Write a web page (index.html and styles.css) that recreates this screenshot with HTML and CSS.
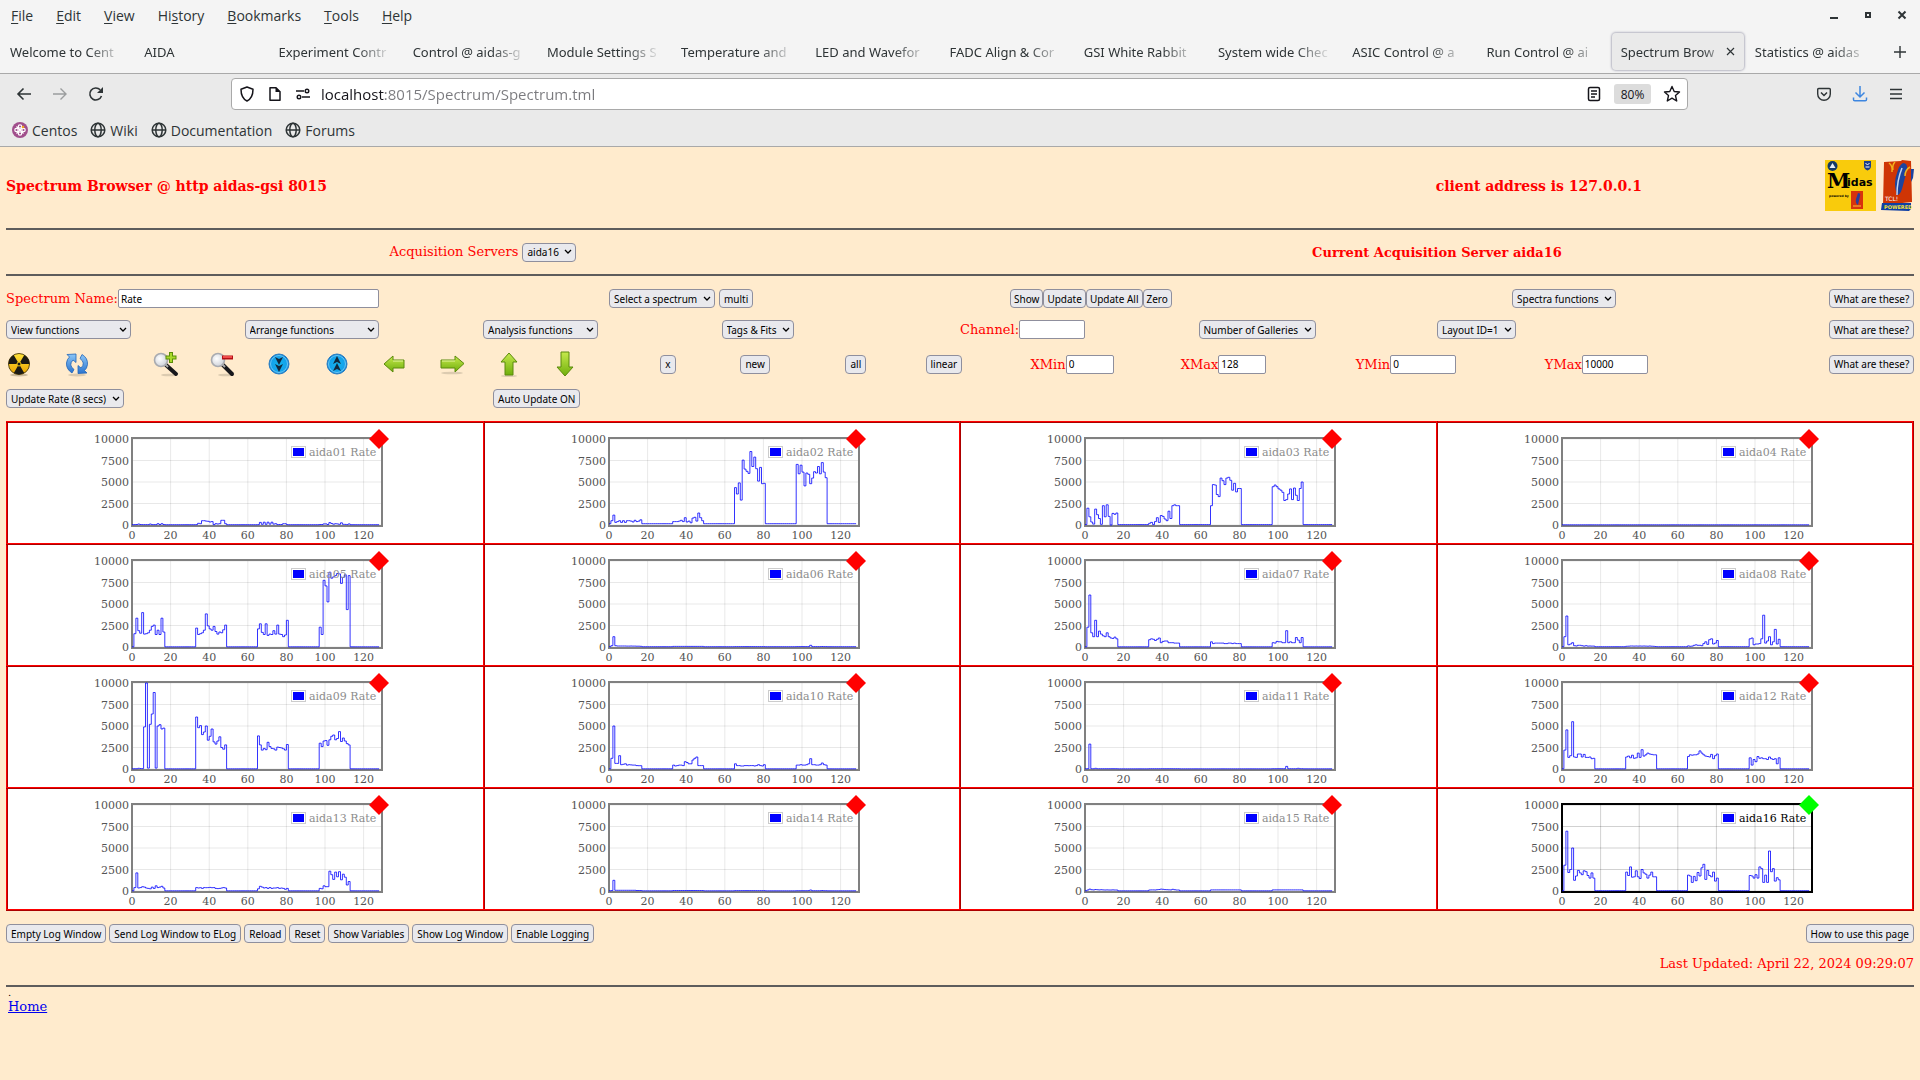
FILE: index.html
```html
<!DOCTYPE html>
<html lang="en">
<head>
    <meta charset="UTF-8">
    <meta name="viewport" content="width=device-width, initial-scale=1.0">
    <title>Spectrum Browser @ aidas-gsi</title>
    <link rel="stylesheet" href="styles.css">
</head>
<body>
    <!-- shared gradients for the toolbar icons -->
    <svg class="defs" width="0" height="0" aria-hidden="true">
        <defs>
            <linearGradient id="green" x1="0" y1="0" x2="0" y2="1">
                <stop offset="0" stop-color="#c6e94c"/>
                <stop offset="1" stop-color="#6fae0c"/>
            </linearGradient>
            <linearGradient id="blue" x1="0" y1="0" x2="0" y2="1">
                <stop offset="0" stop-color="#8cc6f7"/>
                <stop offset="1" stop-color="#2a74cf"/>
            </linearGradient>
            <radialGradient id="disc" cx=".5" cy=".5" r=".5">
                <stop offset="0" stop-color="#12b4ee"/>
                <stop offset=".8" stop-color="#14a0ea"/>
                <stop offset="1" stop-color="#0b6fc0"/>
            </radialGradient>
            <linearGradient id="amber" x1="0" y1="0" x2="0" y2="1">
                <stop offset="0" stop-color="#ffe23a"/>
                <stop offset="1" stop-color="#eba400"/>
            </linearGradient>
            <radialGradient id="lens" cx=".4" cy=".4" r=".6">
                <stop offset="0" stop-color="#ffffff"/>
                <stop offset="1" stop-color="#cfd3da"/>
            </radialGradient>
        </defs>
    </svg>

    <header class="browser">
        <div class="menubar">
            <nav class="menus">
                <a href="#"><u>F</u>ile</a>
                <a href="#"><u>E</u>dit</a>
                <a href="#"><u>V</u>iew</a>
                <a href="#">Hi<u>s</u>tory</a>
                <a href="#"><u>B</u>ookmarks</a>
                <a href="#"><u>T</u>ools</a>
                <a href="#"><u>H</u>elp</a>
            </nav>
            <div class="window-buttons">
                <button type="button" aria-label="Minimize"><svg width="10" height="10" viewBox="0 0 10 10"><path d="M1 8h8" stroke="#2e3436" stroke-width="2"/></svg></button>
                <button type="button" aria-label="Maximize"><svg width="10" height="10" viewBox="0 0 10 10"><rect x="3" y="3" width="4" height="4" fill="none" stroke="#2e3436" stroke-width="2"/></svg></button>
                <button type="button" aria-label="Close"><svg width="10" height="10" viewBox="0 0 10 10"><path d="M1.500 1.500l7 7m0-7l-7 7" stroke="#2e3436" stroke-width="2"/></svg></button>
            </div>
        </div>

        <div class="tabbar">
            <a class="tab" href="#"><span>Welcome to Cent</span></a>
            <a class="tab" href="#"><span>AIDA</span></a>
            <a class="tab" href="#"><span>Experiment Contr</span></a>
            <a class="tab" href="#"><span>Control @ aidas-g</span></a>
            <a class="tab" href="#"><span>Module Settings S</span></a>
            <a class="tab" href="#"><span>Temperature and</span></a>
            <a class="tab" href="#"><span>LED and Wavefor</span></a>
            <a class="tab" href="#"><span>FADC Align &amp; Cor</span></a>
            <a class="tab" href="#"><span>GSI White Rabbit</span></a>
            <a class="tab" href="#"><span>System wide Chec</span></a>
            <a class="tab" href="#"><span>ASIC Control @ a</span></a>
            <a class="tab" href="#"><span>Run Control @ ai</span></a>
            <a class="tab active" href="#"><span>Spectrum Brow</span><svg width="9" height="9" viewBox="0 0 9 9"><path d="M1 1l7 7m0-7l-7 7" stroke="#2e3436" stroke-width="1.200"/></svg></a>
            <a class="tab" href="#"><span>Statistics @ aidas</span></a>
            <button class="new-tab" type="button" aria-label="New tab"><svg width="12" height="12" viewBox="0 0 12 12"><path d="M6 0v12M0 6h12" stroke="#2e3436" stroke-width="1.400"/></svg></button>
        </div>

        <div class="toolbar">
            <div class="nav-buttons">
                <button type="button" aria-label="Back"><svg width="16" height="16" viewBox="0 0 16 16"><path d="M15 8H2m5.500-5.500L2 8l5.500 5.500" fill="none" stroke="#2e3436" stroke-width="1.600"/></svg></button>
                <button type="button" aria-label="Forward" disabled><svg width="16" height="16" viewBox="0 0 16 16"><path d="M1 8h13M8.500 2.500L14 8l-5.500 5.500" fill="none" stroke="#9b9d9e" stroke-width="1.400"/></svg></button>
                <button type="button" aria-label="Reload page"><svg width="16" height="16" viewBox="0 0 16 16"><path d="M13.500 10a6 6 0 1 1-1.300-6.200" fill="none" stroke="#2e3436" stroke-width="1.600"/><path d="M15 1v6H9z" fill="#2e3436"/></svg></button>
            </div>
            <div class="urlbar">
                <svg width="16" height="16" viewBox="0 0 16 16"><path d="M8 1l6 2.200C14 9 12 13 8 15 4 13 2 9 2 3.200z" fill="none" stroke="#15141a" stroke-width="1.500" stroke-linejoin="round"/></svg>
                <svg width="16" height="16" viewBox="0 0 16 16"><path d="M3 1.700h6l4 4v8.600H3z" fill="none" stroke="#15141a" stroke-width="1.500" stroke-linejoin="round"/><path d="M8.500 1l5 5h-5z" fill="#15141a"/></svg>
                <svg width="16" height="16" viewBox="0 0 16 16"><g fill="none" stroke="#15141a" stroke-width="1.400"><path d="M1 5h8M7 11h8"/><circle cx="12" cy="5" r="1.800"/><circle cx="4" cy="11" r="1.800"/></g></svg>
                <input class="url" type="text" aria-label="Address" value="localhost:8015/Spectrum/Spectrum.tml">
                <svg width="16" height="16" viewBox="0 0 16 16"><rect x="2.500" y="1.500" width="11" height="13" rx="1.500" fill="none" stroke="#15141a" stroke-width="1.500"/><path d="M5 5h6M5 8h6M5 11h4" stroke="#15141a" stroke-width="1.300"/></svg>
                <button class="zoom-level" type="button">80%</button>
                <svg width="18" height="18" viewBox="0 0 18 18"><path d="M9 1.500l2.200 5 5.300.500-4 3.600 1.200 5.400L9 13.200 4.300 16l1.200-5.400-4-3.600 5.300-.500z" fill="none" stroke="#15141a" stroke-width="1.400" stroke-linejoin="round"/></svg>
            </div>
            <div class="end-buttons">
                <button type="button" aria-label="Save to Pocket"><svg width="16" height="16" viewBox="0 0 16 16"><path d="M1.700 3.500q0-1 1-1h10.600q1 0 1 1V8a6.300 6.300 0 0 1-12.600 0z" fill="none" stroke="#2e3436" stroke-width="1.400"/><path d="M5 6.500l3 3 3-3" fill="none" stroke="#2e3436" stroke-width="1.500"/></svg></button>
                <button type="button" aria-label="Downloads"><svg width="16" height="16" viewBox="0 0 16 16"><path d="M8 0v11M3.500 6.500L8 11l4.500-4.500M1.500 11.500v2q0 1.300 1.300 1.300h10.400q1.300 0 1.300-1.300v-2" fill="none" stroke="#3d86e0" stroke-width="1.500"/></svg></button>
                <button type="button" aria-label="Open menu"><svg width="16" height="16" viewBox="0 0 16 16"><path d="M2 3.500h12M2 8h12M2 12.500h12" stroke="#2e3436" stroke-width="1.400"/></svg></button>
            </div>
        </div>

        <nav class="bookmarks">
            <a href="#"><svg width="16" height="16" viewBox="0 0 16 16"><circle cx="8" cy="8" r="8" fill="#a14f8c"/><g fill="none" stroke="#fff" stroke-width="1.200"><circle cx="8" cy="4.500" r="1.700"/><circle cx="8" cy="11.500" r="1.700"/><circle cx="4.500" cy="8" r="1.700"/><circle cx="11.500" cy="8" r="1.700"/><path d="M4.500 4.500l7 7m0-7l-7 7"/></g><circle cx="11" cy="5" r="1.300" fill="#efa724"/></svg>Centos</a>
            <a href="#"><svg width="16" height="16" viewBox="0 0 16 16"><g fill="none" stroke="#2e3436" stroke-width="1.500"><circle cx="8" cy="8" r="6.800"/><ellipse cx="8" cy="8" rx="3.200" ry="6.800"/><path d="M1.500 8h13"/></g></svg>Wiki</a>
            <a href="#"><svg width="16" height="16" viewBox="0 0 16 16"><g fill="none" stroke="#2e3436" stroke-width="1.500"><circle cx="8" cy="8" r="6.800"/><ellipse cx="8" cy="8" rx="3.200" ry="6.800"/><path d="M1.500 8h13"/></g></svg>Documentation</a>
            <a href="#"><svg width="16" height="16" viewBox="0 0 16 16"><g fill="none" stroke="#2e3436" stroke-width="1.500"><circle cx="8" cy="8" r="6.800"/><ellipse cx="8" cy="8" rx="3.200" ry="6.800"/><path d="M1.500 8h13"/></g></svg>Forums</a>
        </nav>
    </header>

    <main class="page">
        <div class="title-row">
            <h3>Spectrum Browser @ http aidas-gsi 8015</h3>
            <h3 class="client">client address is 127.0.0.1</h3>
            <div class="logos">
                <svg width="51" height="51" viewBox="0 0 51 51">
                    <rect width="51" height="51" fill="#f9cb0c"/>
                    <circle cx="7.500" cy="6" r="5" fill="#123a66"/>
                    <path d="M4.500 8l3-5 3 5z" fill="#e6eef5"/>
                    <path d="M39 1h7v5q0 3-3.500 4.500Q39 9 39 6z" fill="#1b3f8b"/>
                    <path d="M40.500 3l2 2 2-2m-4 4h4" fill="none" stroke="#fff"/>
                    <text class="midas-m" x="2" y="28">M</text>
                    <text class="midas" x="22" y="26">idas</text>
                    <text class="powered" x="4" y="37">powered by</text>
                    <rect x="26" y="31" width="12" height="18" fill="#d8330c"/>
                    <path d="M33 33q3 0 2 3l-2 9q-3-2-2-6z" fill="#2a3d9b"/>
                    <path d="M28 46h8" stroke="#f7c53a"/>
                </svg>
                <svg width="33" height="51" viewBox="0 0 33 51">
                    <path d="M3 2l17-1 1-1 9 1 1 41-29 3z" fill="#cf3505"/>
                    <path d="M1 43l29 0v6l-2 2-28-1z" fill="#0f3fa5"/>
                    <path d="M22 3q5 0 4 7l-5 19q-2 6-5 6-4-12 0-22 2-8 6-10z" fill="#1c449f"/>
                    <path d="M21 8q-5 12-5 27" fill="none" stroke="#c5d4ee" stroke-width="1.500"/>
                    <path d="M8 3q4 3 3 9M14 2q-3 3-2 8M29 7q-5 3-5 9" fill="none" stroke="#f3b21c" stroke-width="1.500"/>
                    <path d="M30 9l3 0-1 9-2 4z" fill="#1c449f"/>
                    <text class="tcl" x="4" y="41">TCL!</text>
                    <text class="tcl-powered" x="3" y="49">POWERED</text>
                </svg>
            </div>
        </div>
        <hr>
        <div class="server-row">
            <div><label for="server">Acquisition Servers</label> <select id="server"><option>aida16</option></select></div>
            <strong>Current Acquisition Server aida16</strong>
        </div>
        <hr>

        <form class="controls">
            <div class="row row-name">
                <div><label for="name">Spectrum Name:</label><input class="name" type="text" id="name" value="Rate"></div>
                <div class="pair">
                    <select aria-label="Select a spectrum"><option>Select a spectrum</option></select>
                    <button type="button">multi</button>
                </div>
                <div class="tight"><button type="button">Show</button><button type="button">Update</button><button type="button">Update All</button><button type="button">Zero</button></div>
                <div><select aria-label="Spectra functions"><option>Spectra functions</option></select></div>
                <button type="button">What are these?</button>
            </div>

            <div class="row row-functions">
                <div><select class="wide" aria-label="View functions"><option>View functions</option></select></div>
                <div><select class="wider" aria-label="Arrange functions"><option>Arrange functions</option></select></div>
                <div><select class="mid" aria-label="Analysis functions"><option>Analysis functions</option></select></div>
                <div><select aria-label="Tags and fits"><option>Tags &amp; Fits</option></select></div>
                <div><label for="channel">Channel:</label><input class="range" type="text" id="channel"></div>
                <div><select aria-label="Number of galleries"><option>Number of Galleries</option></select></div>
                <div><select aria-label="Layout"><option>Layout ID=1</option></select></div>
                <button type="button">What are these?</button>
            </div>

            <div class="row row-view">
                <button class="icon" type="button" aria-label="Clear"><svg width="26" height="26" viewBox="0 0 26 26"><ellipse cx="13" cy="24" rx="9" ry="1.500" fill="#cbb99b"/><circle cx="13" cy="13" r="10.500" fill="url(#amber)" stroke="#5c4a10"/><path d="M13 13H2.500a10.500 10.500 0 0 1 5.200-9.100zM13 13h10.500a10.500 10.500 0 0 0-5.200-9.100zM13 13l-5.200 9.100a10.500 10.500 0 0 0 10.400 0z" fill="#1b1a14"/><circle cx="13" cy="13" r="2" fill="#1b1a14" stroke="#f5c814"/></svg></button>
                <button class="icon" type="button" aria-label="Refresh"><svg width="26" height="26" viewBox="0 0 26 26"><ellipse cx="13" cy="24" rx="9" ry="1.500" fill="#dccbb0"/><g fill="url(#blue)" stroke="#2264b8" stroke-width=".800"><path d="M8 22Q2 18 2.500 12 3 8 5.500 6L3 3.500 12 3v8.500L9 9q-5 5 1 9.500z"/><path d="M18 3.500q6 3.500 5.500 10-.500 4-3 6l2.500 2.500-9 .500v-8l3 2.500q5-5-1-9.500z"/></g></svg></button>
                <button class="icon" type="button" aria-label="Zoom in"><svg width="26" height="26" viewBox="0 0 26 26"><ellipse cx="16" cy="24" rx="8" ry="1.300" fill="#dccbb0"/><path d="M13 14l10 9" stroke="#17171b" stroke-width="4" stroke-linecap="round"/><path d="M12 13l3 3" stroke="#aaa" stroke-width="2"/><circle cx="8" cy="9" r="6.500" fill="url(#lens)" stroke="#a9abb0" stroke-width="1.600"/><path d="M18 1v11M12.500 6.500h11" stroke="#5b8d08" stroke-width="4"/><path d="M18 2v9M13.500 6.500h9" stroke="#a9d92b" stroke-width="2"/></svg></button>
                <button class="icon" type="button" aria-label="Zoom out"><svg width="26" height="26" viewBox="0 0 26 26"><ellipse cx="16" cy="24" rx="8" ry="1.300" fill="#dccbb0"/><path d="M13 14l9 9" stroke="#17171b" stroke-width="4" stroke-linecap="round"/><path d="M12 13l3 3" stroke="#aaa" stroke-width="2"/><circle cx="8" cy="9" r="6.500" fill="url(#lens)" stroke="#a9abb0" stroke-width="1.600"/><path d="M12 6.500h11" stroke="#b30f14" stroke-width="4"/><path d="M13 6h9" stroke="#f04a4a" stroke-width="2"/></svg></button>
                <button class="icon" type="button" aria-label="Scale down"><svg width="26" height="26" viewBox="0 0 26 26"><circle cx="12" cy="13" r="10" fill="url(#disc)" stroke="#2b7fc4"/><circle cx="12" cy="13" r="8.500" fill="none" stroke="#7fd3fa" stroke-width=".800"/><path d="M8 6l4 2 4-2-4 8zM8 13l4 2 4-2-4 8z" fill="#12283c"/></svg></button>
                <button class="icon" type="button" aria-label="Scale up"><svg width="26" height="26" viewBox="0 0 26 26"><circle cx="12" cy="13" r="10" fill="url(#disc)" stroke="#2b7fc4"/><circle cx="12" cy="13" r="8.500" fill="none" stroke="#7fd3fa" stroke-width=".800"/><path d="M8 13l4-8 4 8-4-2zM8 20l4-8 4 8-4-2z" fill="#12283c"/></svg></button>
                <button class="icon" type="button" aria-label="Move left"><svg width="26" height="26" viewBox="0 0 26 26"><path d="M1 13L10 5v4h11v8H10v4z" fill="url(#green)" stroke="#5b8a0c" stroke-linejoin="round"/><path d="M10 10h10" stroke="#e4f6a0"/></svg></button>
                <button class="icon" type="button" aria-label="Move right"><svg width="26" height="26" viewBox="0 0 26 26"><ellipse cx="12" cy="22" rx="11" ry="1.300" fill="#dccbb0"/><path d="M24 12.500L15 5v4H1v8h14v4z" fill="url(#green)" stroke="#5b8a0c" stroke-linejoin="round"/><path d="M2 10h13" stroke="#e4f6a0"/></svg></button>
                <button class="icon" type="button" aria-label="Move up"><svg width="26" height="26" viewBox="0 0 26 26"><ellipse cx="12" cy="25" rx="8" ry="1" fill="#dccbb0"/><path d="M12 2l8 9h-4v13H8V11H4z" fill="url(#green)" stroke="#5b8a0c" stroke-linejoin="round"/></svg></button>
                <button class="icon" type="button" aria-label="Move down"><svg width="26" height="26" viewBox="0 0 26 26"><path d="M11 25l8-9h-4V1H7v15H3z" fill="url(#green)" stroke="#5b8a0c" stroke-linejoin="round"/></svg></button>
                <div><button type="button">x</button></div>
                <div><button type="button">new</button></div>
                <div><button type="button">all</button></div>
                <div><button type="button">linear</button></div>
                <div><label for="xmin">XMin</label><input class="short" type="text" id="xmin" value="0"></div>
                <div><label for="xmax">XMax</label><input class="short" type="text" id="xmax" value="128"></div>
                <div><label for="ymin">YMin</label><input class="range" type="text" id="ymin" value="0"></div>
                <div><label for="ymax">YMax</label><input class="range" type="text" id="ymax" value="10000"></div>
                <button type="button">What are these?</button>
            </div>

            <div class="row row-update">
                <div><select aria-label="Update rate"><option>Update Rate (8 secs)</option></select></div>
                <div><button type="button">Auto Update ON</button></div>
            </div>
        </form>

        <table class="gallery" id="gallery"></table>

        <div class="log-row">
            <button type="button">Empty Log Window</button>
            <button type="button">Send Log Window to ELog</button>
            <button type="button">Reload</button>
            <button type="button">Reset</button>
            <button type="button">Show Variables</button>
            <button type="button">Show Log Window</button>
            <button type="button">Enable Logging</button>
            <button class="help" type="button">How to use this page</button>
        </div>
        <p class="updated">Last Updated: April 22, 2024 09:29:07</p>
        <hr>
        <footer>
            <div class="status">.</div>
            <a href="#">Home</a>
        </footer>
    </main>

    <script src="script.js"></script>
</body>
</html>
```

FILE: styles.css
```css
body {
    margin: 0;
    background: #ffebcd;
    color: red;
    font-family: "DejaVu Serif", serif;
    font-size: 13px;
}

.defs {
    display: block;
}

svg {
    flex: none;
}

/* Browser window */
.browser {
    background: #f4f4f4;
    color: #2e3436;
    font-family: "Noto Sans", sans-serif;
    border-bottom: 1px solid #a9a9a9;
}

.browser a {
    color: inherit;
    text-decoration: none;
}

.browser button {
    display: flex;
    align-items: center;
    justify-content: center;
    border: none;
    background: none;
    padding: 0;
}

.menubar {
    display: flex;
    justify-content: space-between;
    height: 30px;
}

.menus {
    display: flex;
    align-items: center;
    gap: 1px;
    font: 14px "Open Sans", sans-serif;
}

.menus a {
    padding: 0 11px;
}

.menus u {
    text-underline-offset: 2px;
}

.window-buttons {
    display: flex;
    align-items: center;
    gap: 24px;
    padding-right: 13px;
}

.tabbar {
    display: flex;
    height: 43px;
    border-bottom: 1px solid #a9a9a9;
}

.tab {
    flex: 1;
    min-width: 0;
    display: flex;
    align-items: center;
    margin: 3px 1px;
    padding: 0 9px;
    border-radius: 4px;
}

.tab span {
    flex: 1;
    overflow: hidden;
    white-space: nowrap;
    mask-image: linear-gradient(to left, transparent, #000 36px);
}

.tab.active {
    background: #eaeaea;
    box-shadow: 0 0 2px 1px #b8b8c4;
}

.tab.active span {
    mask-image: linear-gradient(to left, transparent, #000 24px);
}

.new-tab {
    width: 41px;
}

.toolbar {
    display: flex;
    align-items: center;
    padding: 4px 16px;
    background: #eaeaea;
}

.nav-buttons {
    display: flex;
    gap: 20px;
    width: 215px;
}

.urlbar {
    flex: 1;
    display: flex;
    align-items: center;
    gap: 12px;
    height: 30px;
    padding: 0 6px 0 7px;
    background: #fff;
    border: 1px solid #a9a9a9;
    border-radius: 4px;
}

.url {
    flex: 1;
    min-width: 0;
    border: none;
    outline: none;
    padding: 0;
    margin-left: -2px;
    font: 15px "Open Sans", sans-serif;
    color: transparent;
    background: linear-gradient(to right, #15141a 64px, #7a7a7e 64px);
    background-clip: text;
}

.browser .zoom-level {
    width: 37px;
    height: 20px;
    background: #dcdcdc;
    border-radius: 3px;
    color: #15141a;
    font: 12px "Open Sans", sans-serif;
}

.end-buttons {
    display: flex;
    justify-content: flex-end;
    gap: 20px;
    width: 216px;
}

.bookmarks {
    display: flex;
    align-items: center;
    gap: 13px;
    height: 32px;
    padding-left: 12px;
    background: #eaeaea;
    font: 14px "Open Sans", sans-serif;
}

.bookmarks a {
    display: flex;
    align-items: center;
    gap: 4px;
}

/* Spectrum page */
.page {
    padding: 0 6px;
}

.page hr {
    margin: 0;
    border: none;
    height: 2px;
    background: #5e5c5c;
}

h3 {
    margin: 0;
    font-size: 14px;
}

.title-row {
    display: grid;
    grid-template-columns: 1fr 30% auto;
    align-items: center;
    padding: 13px 0 17px;
}

.client {
    text-align: center;
}

.logos {
    display: flex;
    gap: 5px;
}

.midas-m {
    font: bold 21px "DejaVu Serif", serif;
}

.midas {
    font: bold 11px "DejaVu Sans", sans-serif;
}

.powered {
    font: bold 3px "DejaVu Sans", sans-serif;
}

.tcl {
    font: 6px "DejaVu Sans", sans-serif;
    fill: #fff;
}

.tcl-powered {
    font: bold 5px "DejaVu Sans", sans-serif;
    fill: #f3e13c;
}

.server-row {
    display: grid;
    grid-template-columns: 1fr 1fr;
    align-items: center;
    justify-items: center;
    height: 44px;
}

.page button,
.page select,
.page input {
    box-sizing: border-box;
    height: 19px;
    margin: 0;
    border: 1px solid #8f8f9d;
    font: 10px "Noto Sans", sans-serif;
    color: #000;
    vertical-align: middle;
}

.page button {
    padding: 0 4px;
    border-radius: 4px;
    background: #e9e9ed;
    white-space: nowrap;
}

.page .tight button {
    padding: 0 3px;
}

.page select {
    appearance: none;
    padding: 0 16px 0 4px;
    border-radius: 4px;
    background: #e9e9ed url("data:image/svg+xml,%3Csvg xmlns='http://www.w3.org/2000/svg' width='8' height='6'%3E%3Cpath d='M1 1l3 3 3-3' fill='none' stroke='%23000' stroke-width='1.300'/%3E%3C/svg%3E") no-repeat right 3px center;
}

.page input {
    padding: 0 2px;
    border-radius: 2px;
    background: #fff;
}

.page .icon {
    width: 26px;
    height: 26px;
    padding: 0;
    border: none;
    background: none;
}

.name { width: 261px; }
.range { width: 66px; }
.short { width: 48px; }
.wide { width: 125px; }
.wider { width: 134px; }
.mid { width: 115px; }

.row {
    display: grid;
    align-items: center;
    white-space: nowrap;
}

.row > div {
    display: flex;
    align-items: center;
}

.row > .pair {
    gap: 4px;
}

.row-name {
    grid-template-columns: 603fr 401fr 502fr 317fr 85px;
    margin-top: 13px;
}

.row-functions {
    grid-template-columns: repeat(7, 1fr) calc(100% / 8);
    margin-top: 12px;
}

.row-functions > button {
    justify-self: end;
}

.row-view {
    grid-template-columns: 58fr 89fr 57fr 57fr 58fr 58fr 57fr 57fr 57fr 106fr 80fr 105fr 80fr 105fr 150fr 175fr 189fr 284fr 85px;
    margin-top: 12px;
}

.row-update {
    grid-template-columns: 487fr 1421fr;
    margin: 12px 0 13px;
}

/* Gallery of plots */
.gallery {
    width: 100%;
    table-layout: fixed;
    border-collapse: collapse;
}

.gallery td {
    padding: 0;
    background: #fff;
    border: 2px ridge red;
}

.plot {
    display: block;
    margin: 0 auto;
    font-size: 11px;
    fill: #545454;
}

.plot .grid {
    stroke: #000;
    stroke-opacity: 0.09;
    stroke-width: 1;
}

.plot .frame {
    fill: none;
    stroke: #808080;
    stroke-width: 2;
}

.plot .trace {
    fill: none;
    stroke: #00f;
    stroke-opacity: 0.8;
    stroke-width: 1;
}

.plot .x-label { text-anchor: middle; }
.plot .y-label { text-anchor: end; }
.plot .legend { fill: #8c8c8c; }
.plot .swatch { fill: #00f; }

.plot .swatch-box {
    fill: #fff;
    stroke: #ccc;
}

.plot .marker { fill: red; }

.plot.selected .frame { stroke: #000; }
.plot.selected .legend { fill: #000; }
.plot.selected .marker { fill: lime; }
.plot.selected .grid { stroke-opacity: 0.18; }

/* Bottom of the page */
.log-row {
    display: flex;
    gap: 3px;
    margin-top: 13px;
}

.log-row .help {
    margin-left: auto;
}

.updated {
    margin: 13px 0;
    line-height: 16px;
    text-align: right;
}

footer {
    padding-left: 2px;
    color: #000;
}

footer a {
    color: #00e;
}

.status {
    font-size: 10px;
    line-height: 12px;
}
```

FILE: script.js
```javascript
// Rates of the 4 x 16 ASIC channels of every module. Channels start at
// bins 1, 33, 65 and 97; the bins in between sit at the base level.
const flat = v => Array(16).fill(v);

const modules = [
    { name: 'aida01', base: 40, blocks: [
        [50, 60, 120, 60, 50, 50, 50, 50, 120, 50, 50, 50, 150, 60, 150, 60],
        [50, 200, 150, 500, 500, 450, 430, 350, 400, 50, 150, 120, 150, 550, 550, 150],
        [50, 300, 80, 330, 80, 320, 100, 320, 100, 150, 50, 60, 60, 150, 150, 50],
        [60, 60, 130, 130, 60, 280, 180, 90, 150, 130, 80, 260, 80, 70, 50, 130]] },
    { name: 'aida02', base: 150, blocks: [
        [500, 1150, 300, 400, 500, 300, 500, 300, 500, 500, 450, 350, 550, 400, 450, 600],
        [400, 400, 400, 450, 550, 400, 850, 350, 450, 250, 800, 900, 450, 1400, 850, 500],
        [4350, 3600, 4900, 2900, 7550, 6500, 6250, 6000, 8550, 6800, 7900, 6550, 5100, 6700, 4800, 4850],
        [7050, 5950, 6950, 6150, 4550, 6050, 5900, 4800, 5450, 6200, 6050, 6800, 5950, 7250, 6150, 5500]] },
    { name: 'aida03', base: 50, blocks: [
        [1950, 950, 350, 100, 1850, 1200, 750, 80, 2250, 950, 2350, 1000, 0, 1350, 1250, 1400],
        [200, 300, 50, 400, 850, 300, 1100, 1000, 700, 500, 1600, 750, 2250, 2350, 2250, 2250],
        [2250, 4700, 4650, 3550, 3300, 5450, 5150, 4700, 5450, 5550, 5200, 4050, 4850, 3850, 4250, 4250],
        [4450, 4650, 4450, 4200, 4050, 3800, 2850, 2950, 3600, 4200, 2950, 4300, 3450, 2850, 4250, 5000]] },
    { name: 'aida04', base: 20, blocks: [flat(20), flat(20), flat(20), flat(20)] },
    { name: 'aida05', base: 20, blocks: [
        [1550, 3350, 1900, 1600, 4000, 1500, 1550, 1650, 1950, 2400, 2550, 1450, 1950, 1450, 3350, 1750],
        [2200, 1450, 1550, 1650, 1950, 3850, 2450, 2100, 1950, 2400, 1800, 1500, 1750, 1650, 2000, 2550],
        [2100, 2700, 1700, 1450, 2700, 1350, 1500, 1450, 1900, 1500, 2550, 1500, 1450, 1200, 1400, 3100],
        [2300, 1450, 7750, 7100, 5250, 8700, 8000, 8150, 8300, 8550, 8500, 7400, 8100, 8400, 4350, 8300]] },
    { name: 'aida06', base: 40, blocks: [
        [150, 1200, 150, 120, 120, 120, 120, 120, 100, 100, 120, 100, 100, 90, 90, 80],
        flat(70), flat(50),
        [50, 50, 50, 50, 50, 50, 50, 200, 50, 50, 50, 50, 50, 60, 50, 50]] },
    { name: 'aida07', base: 20, blocks: [
        [2300, 6050, 1650, 1200, 3100, 1200, 1850, 1500, 1300, 1200, 1650, 1200, 1050, 1000, 1150, 950],
        [850, 950, 900, 750, 900, 1050, 500, 650, 700, 700, 500, 500, 500, 450, 450, 450],
        [600, 400, 450, 450, 450, 450, 450, 400, 400, 450, 450, 400, 450, 400, 400, 400],
        [500, 450, 650, 600, 600, 500, 500, 1900, 500, 600, 500, 500, 1100, 800, 500, 1100]] },
    { name: 'aida08', base: 30, blocks: [
        [1200, 3600, 250, 350, 500, 150, 120, 200, 200, 150, 100, 150, 100, 120, 100, 100],
        [80, 90, 120, 120, 110, 120, 110, 120, 110, 120, 110, 90, 120, 90, 80, 60],
        [130, 80, 100, 200, 250, 200, 200, 150, 400, 600, 300, 850, 950, 350, 450, 750],
        [950, 1050, 250, 350, 350, 400, 950, 3700, 450, 700, 1200, 250, 600, 2050, 350, 900]] },
    { name: 'aida09', base: 20, blocks: [
        [30, 30, 80, 60, 50, 4900, 10000, 100, 5200, 6400, 8900, 100, 5000, 5150, 4650, 4750],
        [6050, 4800, 5050, 4000, 4300, 5000, 3350, 3800, 4650, 3150, 2900, 3250, 3750, 2500, 2300, 2800],
        [3850, 2800, 2200, 2400, 2250, 3100, 2600, 2400, 2350, 2200, 2550, 2500, 2450, 2350, 2200, 2850],
        [3000, 2600, 3250, 3300, 2750, 3400, 3800, 3950, 3400, 3550, 4350, 3200, 3600, 3250, 2950, 2800]] },
    { name: 'aida10', base: 20, blocks: [
        [1250, 5000, 650, 650, 1550, 500, 550, 600, 450, 500, 480, 450, 450, 400, 380, 380],
        [450, 350, 400, 450, 450, 400, 850, 750, 600, 600, 1050, 1250, 1400, 400, 400, 400],
        [600, 400, 400, 350, 350, 400, 400, 380, 400, 400, 350, 400, 500, 400, 350, 500],
        [450, 450, 500, 450, 450, 500, 600, 1200, 500, 500, 450, 450, 500, 700, 500, 450]] },
    { name: 'aida11', base: 20, blocks: [
        [30, 2900, 30, 30, 80, 30, 30, 30, 30, 30, 30, 30, 30, 30, 30, 30],
        flat(30), flat(20),
        [30, 30, 30, 30, 30, 30, 30, 300, 30, 30, 30, 30, 30, 80, 30, 30]] },
    { name: 'aida12', base: 20, blocks: [
        [2200, 4550, 1350, 1550, 5500, 1400, 1350, 1750, 1750, 1400, 1700, 1350, 1350, 1400, 1200, 1250],
        [1400, 1500, 1300, 1600, 1250, 1300, 1850, 1350, 2250, 1500, 1650, 1850, 1750, 1700, 1650, 1650],
        [1450, 1650, 1600, 1650, 1650, 1750, 2100, 1850, 1650, 1500, 1450, 1400, 1700, 1200, 1550, 1750],
        [1300, 450, 1100, 850, 1450, 1250, 1300, 1200, 1200, 1100, 1400, 1200, 1100, 1200, 600, 1300]] },
    { name: 'aida13', base: 20, blocks: [
        [400, 2100, 350, 400, 500, 450, 350, 300, 250, 450, 300, 600, 400, 450, 550, 350],
        [400, 350, 380, 300, 400, 380, 400, 420, 380, 400, 300, 280, 300, 350, 400, 350],
        [250, 550, 450, 350, 400, 300, 400, 300, 350, 350, 400, 300, 350, 300, 200, 300],
        [300, 250, 600, 500, 500, 2300, 1900, 1350, 2200, 1650, 2250, 1300, 1950, 1600, 700, 1100]] },
    { name: 'aida14', base: 20, blocks: [
        [50, 1250, 80, 80, 80, 80, 80, 80, 80, 80, 80, 80, 80, 60, 60, 60],
        flat(60), flat(50),
        [40, 40, 40, 40, 40, 40, 50, 120, 40, 40, 40, 40, 40, 60, 40, 40]] },
    { name: 'aida15', base: 20, blocks: [
        [120, 220, 150, 130, 180, 150, 130, 150, 130, 120, 130, 120, 120, 130, 120, 120],
        [120, 130, 130, 120, 150, 170, 220, 200, 160, 150, 140, 130, 200, 150, 120, 120],
        flat(130), flat(130)] },
    { name: 'aida16', base: 30, selected: true, blocks: [
        [3000, 6950, 2150, 2500, 5000, 1250, 1750, 2400, 2100, 1900, 2350, 2250, 1800, 1500, 2100, 1500],
        [2200, 1800, 2800, 1600, 1650, 2350, 1650, 1450, 2500, 2100, 1950, 1500, 1850, 2200, 1650, 1650],
        [1850, 1750, 1000, 1700, 1200, 2150, 1750, 2700, 3100, 1350, 2400, 1800, 1650, 2200, 1150, 1500],
        [1800, 1750, 1500, 1900, 1500, 2800, 2600, 1000, 1850, 1000, 4650, 2250, 2600, 1150, 1550, 1300]] }
];

// Plot area inside the 302 x 120 drawing
const left = 38, right = 287, top0 = 16, bottom = 102;
const px = bin => left + bin * (right - left) / 129;
const py = value => bottom - value * (bottom - top0) / 10000;

function trace(module) {
    const bins = Array(128).fill(module.base);
    module.blocks.forEach((block, b) => {
        block.forEach((value, i) => { bins[1 + b * 32 + i] = value; });
    });
    let d = 'M' + left + ' ' + py(bins[0]).toFixed(1);
    bins.forEach((value, i) => {
        d += 'V' + py(value).toFixed(1) + 'H' + px(i + 1).toFixed(1);
    });
    return d;
}

function plot(module) {
    let svg = '<svg class="plot' + (module.selected ? ' selected' : '') + '" width="302" height="120" viewBox="0 0 302 120">';
    for (let bin = 0; bin <= 120; bin += 20) {
        svg += '<path class="grid" d="M' + px(bin) + ' ' + top0 + 'V' + bottom + '"/>';
        svg += '<text class="x-label" x="' + px(bin) + '" y="116">' + bin + '</text>';
    }
    for (let value = 0; value <= 10000; value += 2500) {
        svg += '<path class="grid" d="M' + left + ' ' + py(value) + 'H' + right + '"/>';
        svg += '<text class="y-label" x="35" y="' + (py(value) + 4) + '">' + value + '</text>';
    }
    svg += '<rect class="frame" x="38" y="15" width="250" height="88"/>';
    svg += '<path class="trace" d="' + trace(module) + '"/>';
    svg += '<rect class="swatch-box" x="197.5" y="23.5" width="14" height="11"/>';
    svg += '<rect class="swatch" x="199" y="25" width="11" height="8"/>';
    svg += '<text class="legend" x="215" y="33">' + module.name + ' Rate</text>';
    svg += '<path class="marker" d="M285 6l10 10-10 10-10-10z"/>';
    return svg + '</svg>';
}

const gallery = document.getElementById('gallery');
for (let r = 0; r < 4; r++) {
    const row = gallery.insertRow();
    modules.slice(r * 4, r * 4 + 4).forEach(module => {
        row.insertCell().innerHTML = plot(module);
    });
}
```
